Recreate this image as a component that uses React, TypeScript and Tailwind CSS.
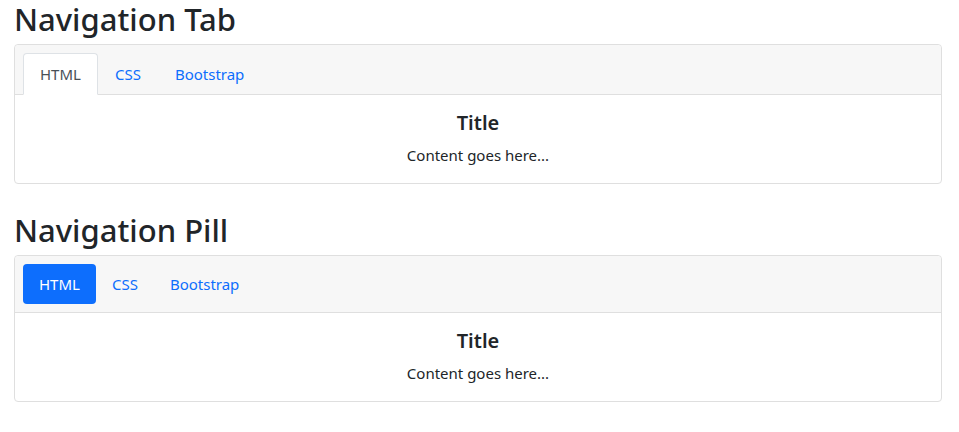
import React, { useState } from 'react';

const items = ['HTML', 'CSS', 'Bootstrap'];

const font = { fontFamily: '"Noto Sans", "Open Sans", sans-serif' };

const CardBody: React.FC = () => (
  <div className="px-4 py-4 text-center text-[#212529]">
    <h5 className="text-[20px] leading-[24px] font-semibold mb-2">Title</h5>
    <p className="text-[15px] leading-[24px]">Content goes here...</p>
  </div>
);

const TabCard: React.FC = () => {
  const [active, setActive] = useState(0);
  return (
    <div className="w-[928px] border border-[#dfdfdf] rounded-[4px]">
      <div className="bg-[#f7f7f7] border-b border-[#dfdfdf] px-2 pt-2 rounded-t-[4px]">
        <ul className="flex -mb-px">
          {items.map((item, i) => (
            <li key={item}>
              <button
                type="button"
                onClick={() => setActive(i)}
                className={
                  i === active
                    ? 'px-4 py-2 text-[15px] leading-[24px] border border-[#dee2e6] border-b-white bg-white text-[#495057] rounded-t-[4px]'
                    : 'px-4 py-2 text-[15px] leading-[24px] border border-transparent text-[#0d6efd] rounded-t-[4px]'
                }
              >
                {item}
              </button>
            </li>
          ))}
        </ul>
      </div>
      <CardBody />
    </div>
  );
};

const PillCard: React.FC = () => {
  const [active, setActive] = useState(0);
  return (
    <div className="w-[928px] border border-[#dfdfdf] rounded-[4px]">
      <div className="bg-[#f7f7f7] border-b border-[#dfdfdf] px-2 py-2 rounded-t-[4px]">
        <ul className="flex">
          {items.map((item, i) => (
            <li key={item}>
              <button
                type="button"
                onClick={() => setActive(i)}
                className={
                  i === active
                    ? 'px-4 py-2 text-[15px] leading-[24px] bg-[#0d6efd] text-white rounded-[4px]'
                    : 'px-4 py-2 text-[15px] leading-[24px] text-[#0d6efd] rounded-[4px]'
                }
              >
                {item}
              </button>
            </li>
          ))}
        </ul>
      </div>
      <CardBody />
    </div>
  );
};

export default function App() {
  return (
    <div className="bg-white min-h-screen px-[14px]" style={font}>
      <h3 className="text-[31px] leading-[38px] font-medium text-[#212529] mb-[6px]">Navigation Tab</h3>
      <TabCard />
      <h3 className="text-[31px] leading-[38px] font-medium text-[#212529] mt-[27px] mb-[6px]">Navigation Pill</h3>
      <PillCard />
    </div>
  );
}
